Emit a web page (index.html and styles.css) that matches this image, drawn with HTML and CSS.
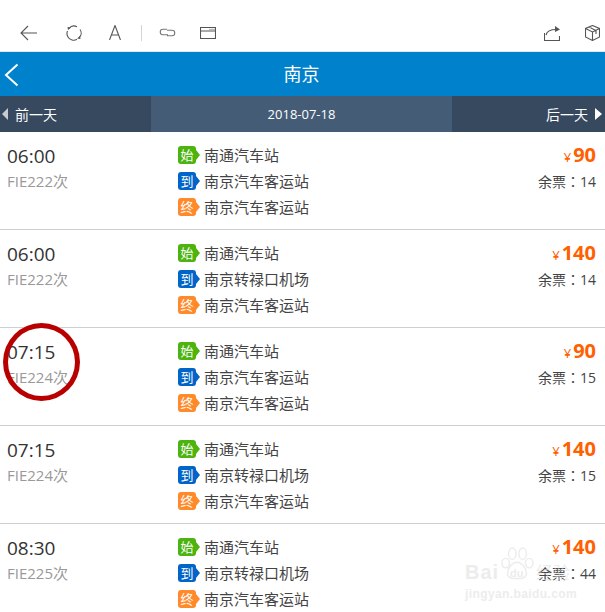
FILE: index.html
```html
<!DOCTYPE html>
<html>
<head>
    <title>南京</title>
    <meta name="viewport" content="width=device-width, initial-scale=1">
    <link rel="stylesheet" href="styles.css">
</head>
<body>
    <div class="toolbar">
        <svg class="tool" width="17" height="16" viewBox="0 0 17 16"><path d="M17 8H1M8 1L1 8L8 15"/></svg>
        <svg class="tool t-reload" width="16" height="16" viewBox="0 0 16 16"><path d="M3 3.500A6.500 6.500 0 0 1 11 1.800M14 4.500A6.500 6.500 0 0 1 13 13M11 14.300A6.500 6.500 0 0 1 2 12A6.500 6.500 0 0 1 1.500 6"/><path class="solid" d="M1.500 2l3.500.500L2 5zM14.500 14l-3.500-.5L14 11z"/></svg>
        <svg class="tool t-font" width="12" height="15" viewBox="0 0 12 15"><path d="M.5 15L6 .5L11.500 15M2.500 10h7"/></svg>
        <span class="tool-sep"></span>
        <svg class="tool t-link" width="17" height="9" viewBox="0 0 17 9"><path d="M8 1.200H4a2.700 2.700 0 0 0 0 5.500H9M8 7.800h5a2.700 2.700 0 0 0 0-5.500H8"/></svg>
        <svg class="tool t-window" width="16" height="12" viewBox="0 0 16 12"><path d="M.5.500h15v11H.5zM.5 4h15"/><path class="dots" d="M9.500 2.300h1M11.500 2.300h1M13.500 2.300h1"/></svg>
        <span class="tool-space"></span>
        <svg class="tool t-share" width="16" height="16" viewBox="0 0 16 16"><path d="M.5 8v7.500h15V11"/><path d="M2 10C3 6 6 4.500 12 4.500"/><path class="solid" d="M11 1l5 3.500L11 7z"/></svg>
        <svg class="tool t-box" width="15" height="16" viewBox="0 0 15 16"><path d="M7.500.500L14.500 3.500V12L7.500 15.500L.5 12V3.500zM.5 3.500L7.500 7L14.500 3.500M7.500 7V15.500M4 2L11 5.500V9"/></svg>
    </div>

    <div class="title-bar">
        <svg class="back" width="15" height="24" viewBox="0 0 15 24"><path d="M13.500 1.500L2 12L13.500 22.500"/></svg>
        <span>南京</span>
    </div>

    <div class="date-nav">
        <div class="day-btn"><i class="arrow-l"></i>前一天</div>
        <div class="date-now">2018-07-18</div>
        <div class="day-btn right">后一天<i class="arrow-r"></i></div>
    </div>

    <div class="list">
        <div class="row">
            <div class="col-time"><div class="time">06:00</div><div class="code">FIE222次</div></div>
            <div class="col-stops">
                <div class="stop"><span class="tag green">始</span>南通汽车站</div>
                <div class="stop"><span class="tag blue">到</span>南京汽车客运站</div>
                <div class="stop"><span class="tag orange">终</span>南京汽车客运站</div>
            </div>
            <div class="col-price"><div class="price"><small>¥</small>90</div><div class="left">余票：14</div></div>
        </div>
        <div class="row">
            <div class="col-time"><div class="time">06:00</div><div class="code">FIE222次</div></div>
            <div class="col-stops">
                <div class="stop"><span class="tag green">始</span>南通汽车站</div>
                <div class="stop"><span class="tag blue">到</span>南京转禄口机场</div>
                <div class="stop"><span class="tag orange">终</span>南京汽车客运站</div>
            </div>
            <div class="col-price"><div class="price"><small>¥</small>140</div><div class="left">余票：14</div></div>
        </div>
        <div class="row">
            <div class="col-time"><div class="time">07:15</div><div class="code">FIE224次</div></div>
            <div class="col-stops">
                <div class="stop"><span class="tag green">始</span>南通汽车站</div>
                <div class="stop"><span class="tag blue">到</span>南京汽车客运站</div>
                <div class="stop"><span class="tag orange">终</span>南京汽车客运站</div>
            </div>
            <div class="col-price"><div class="price"><small>¥</small>90</div><div class="left">余票：15</div></div>
        </div>
        <div class="row">
            <div class="col-time"><div class="time">07:15</div><div class="code">FIE224次</div></div>
            <div class="col-stops">
                <div class="stop"><span class="tag green">始</span>南通汽车站</div>
                <div class="stop"><span class="tag blue">到</span>南京转禄口机场</div>
                <div class="stop"><span class="tag orange">终</span>南京汽车客运站</div>
            </div>
            <div class="col-price"><div class="price"><small>¥</small>140</div><div class="left">余票：15</div></div>
        </div>
        <div class="row">
            <div class="col-time"><div class="time">08:30</div><div class="code">FIE225次</div></div>
            <div class="col-stops">
                <div class="stop"><span class="tag green">始</span>南通汽车站</div>
                <div class="stop"><span class="tag blue">到</span>南京转禄口机场</div>
                <div class="stop"><span class="tag orange">终</span>南京汽车客运站</div>
            </div>
            <div class="col-price"><div class="price"><small>¥</small>140</div><div class="left">余票：44</div></div>
        </div>
    </div>

    <!-- red marker drawn over the screenshot -->
    <div class="circle"></div>

    <div class="watermark">
        <svg class="paw" width="34" height="36" viewBox="0 0 36 38">
            <ellipse cx="6" cy="17" rx="4" ry="5"/><ellipse cx="13" cy="7" rx="4" ry="6"/><ellipse cx="24" cy="7" rx="4" ry="6"/><ellipse cx="31" cy="17" rx="4" ry="5"/><path d="M18 16c-5 0-10 6-10 12c0 5 6 6 10 5c4 1 10 0 10-5c0-6-5-12-10-12z"/>
        </svg>
        <div class="wm-logo">Bai</div>
        <div class="wm-du">du</div>
        <div class="wm-cn">经验</div>
        <div class="wm-url">jingyan.baidu.com</div>
    </div>
</body>
</html>
```

FILE: styles.css
```css
html, body { margin: 0; padding: 0; }
body { position: relative; width: 605px; height: 612px; overflow: hidden; background: #fff; color: #333; font-family: "Open Sans", "Noto Sans CJK SC", sans-serif; }

/* Browser toolbar */
.toolbar { height: 52px; box-sizing: border-box; padding: 25px 5px 0 20px; border-bottom: 1px solid #e6e6e6; display: flex; align-items: flex-start; }
.tool { display: block; flex: none; fill: none; stroke: #555; stroke-width: 1.1; }
.tool .solid { fill: #555; stroke: none; }
.tool .dots { stroke-width: 1; }
.t-reload { margin-left: 29px; }
.t-font { margin-left: 27px; }
.tool-sep { width: 1px; height: 16px; margin-left: 20px; background: #d5d5d5; }
.t-link { margin: 3px 0 0 17px; stroke: #777; }
.t-window { margin: 2px 0 0 24px; }
.tool-space { flex: 1; }
.t-box { margin-left: 25px; }

/* Blue title */
.title-bar { position: relative; height: 44px; padding: 0 2px 2px 0; box-sizing: border-box; background: #0081cc; color: #fff; font-size: 18px; display: flex; align-items: center; justify-content: center; }
.back { position: absolute; left: 4px; top: 11px; fill: none; stroke: #fff; stroke-width: 2; }

/* Date nav */
.date-nav { height: 36px; display: flex; background: #36495e; color: #fff; font-size: 14px; }
.day-btn { width: 151px; box-sizing: border-box; padding-left: 15px; display: flex; align-items: center; position: relative; }
.day-btn.right { justify-content: flex-end; padding: 0 17px 0 0; width: 153px; }
.date-now { flex: 1; background: #455c76; text-align: center; line-height: 36px; font-size: 13px; }
.arrow-l, .arrow-r { position: absolute; top: 12px; width: 0; height: 0; border-top: 6px solid transparent; border-bottom: 6px solid transparent; }
.arrow-l { left: 2px; border-right: 6px solid #c8ccd1; }
.arrow-r { right: 3px; border-left: 7px solid #fff; }

/* Rows */
.row { height: 97px; border-bottom: 1px solid #cfcfcf; display: flex; }
.col-time { width: 178px; padding: 11px 0 0 7px; box-sizing: border-box; }
.time { font-size: 19px; line-height: 26px; color: #333; }
.code { font-size: 15px; line-height: 25px; color: #999; }
.col-stops { flex: 1; padding-top: 10px; }
.stop { height: 26px; display: flex; align-items: center; font-size: 15px; line-height: 26px; color: #444; }
.tag { position: relative; width: 18px; height: 18px; margin-right: 8px; border-radius: 3px; color: #fff; font-size: 13px; line-height: 18px; text-align: center; }
.tag::after { content: ""; position: absolute; left: 18px; top: 4px; border-left: 4px solid; border-top: 5px solid transparent; border-bottom: 5px solid transparent; }
.green { background: #4db30f; }
.green::after { border-left-color: #4db30f; }
.blue { background: #0064c8; }
.blue::after { border-left-color: #0064c8; }
.orange { background: #ff8a2b; }
.orange::after { border-left-color: #ff8a2b; }
.col-price { width: 160px; padding: 10px 9px 0 0; box-sizing: border-box; text-align: right; }
.price { font-size: 20px; line-height: 26px; font-weight: bold; color: #ff6000; }
.price small { font-size: 13px; margin-right: 2px; font-weight: normal; }
.left { font-family: "Open Sans", "Noto Sans CJK TC", sans-serif; font-size: 14px; line-height: 23px; color: #444; }

/* Overlays */
.circle { position: absolute; left: 3px; top: 323px; width: 77px; height: 78px; box-sizing: border-box; border: 5px solid #b90000; border-radius: 50%; }
.watermark { position: absolute; left: 463px; top: 546px; width: 135px; height: 60px; color: #dedede; opacity: .55; }
.paw { position: absolute; left: 37px; top: 1px; fill: none; stroke: #dedede; stroke-width: 1.500; }
.wm-logo { position: absolute; left: 2px; top: 14px; font: bold 20px/24px "Liberation Sans", sans-serif; letter-spacing: 1px; }
.wm-du { position: absolute; left: 47px; top: 20px; font: bold 11px/14px "Liberation Sans", sans-serif; }
.wm-cn { position: absolute; left: 73px; top: 17px; font-size: 17px; line-height: 20px; }
.wm-url { position: absolute; left: 2px; top: 40px; font: bold 12px/16px "Liberation Sans", sans-serif; letter-spacing: .4px; white-space: nowrap; }
```
